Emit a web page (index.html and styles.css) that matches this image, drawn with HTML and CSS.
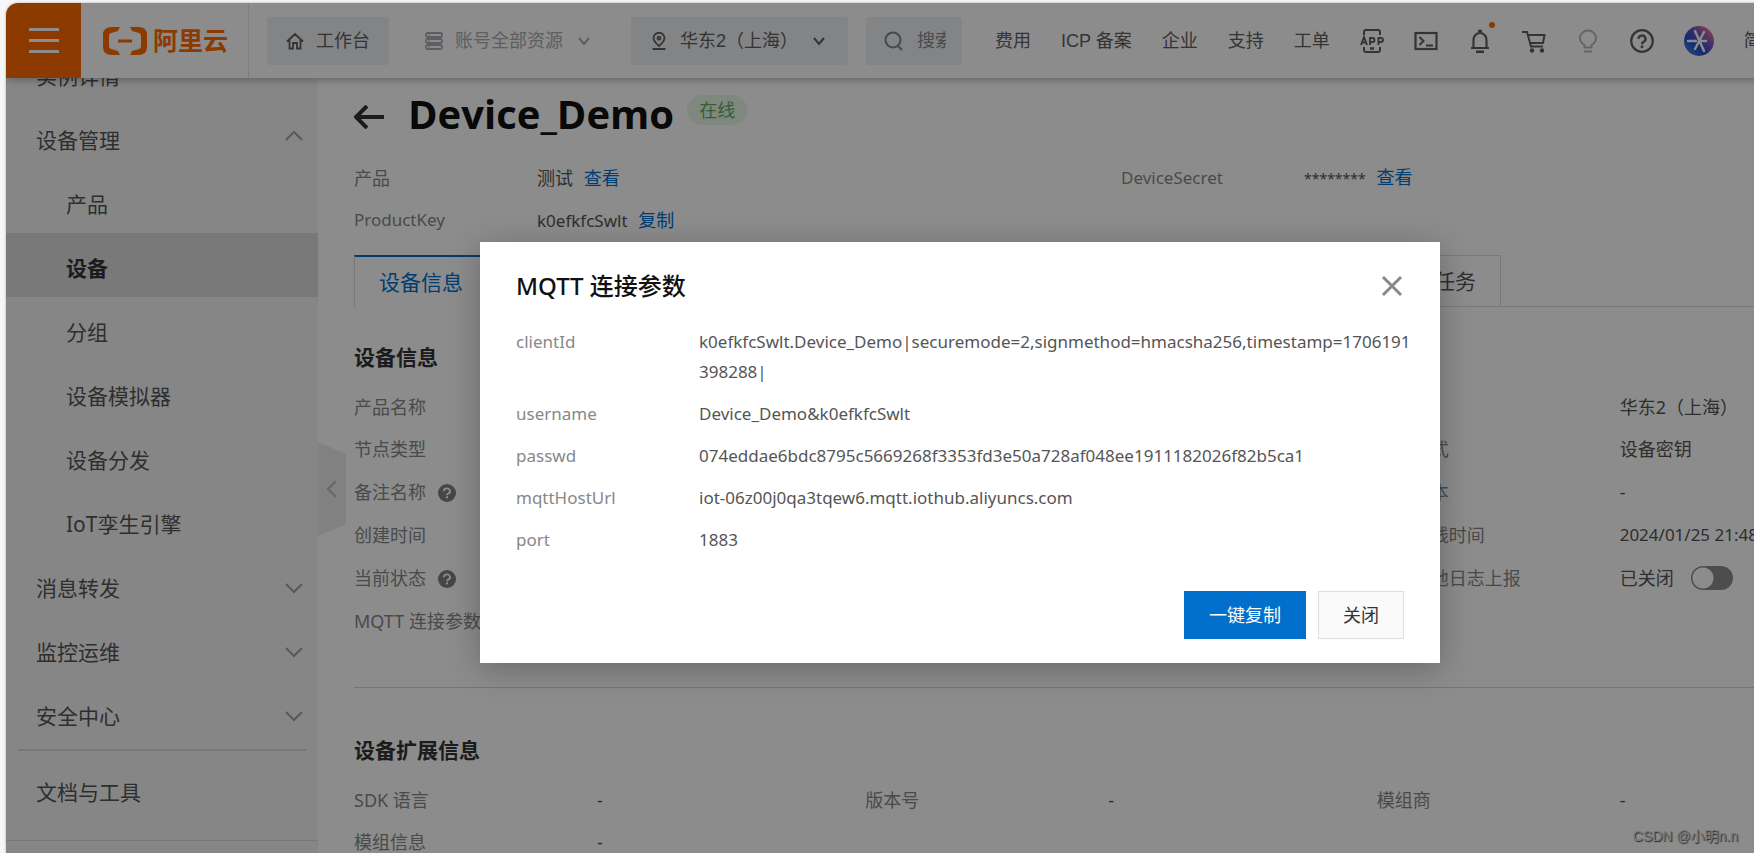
FILE: index.html
```html
<!DOCTYPE html>
<html lang="zh-CN">
<head>
<meta charset="utf-8">
<title>Device_Demo</title>
<link rel="stylesheet" href="styles.css">
</head>
<body>
<svg class="defs" aria-hidden="true">
  <symbol id="chevron" viewBox="0 0 18 12"><path d="M1 2l8 8 8-8" fill="none" stroke="currentColor" stroke-width="2"/></symbol>
  <symbol id="caret" viewBox="0 0 12 10"><path d="M1 2l5 6 5-6" fill="none" stroke="currentColor" stroke-width="2"/></symbol>
  <symbol id="help-solid" viewBox="0 0 18 18"><circle cx="9" cy="9" r="9" fill="currentColor"/><path d="M6 7.200a3 2.700 0 1 1 4.300 2.300c-.9.450-1.300.8-1.300 1.700" fill="none" stroke="#fff" stroke-width="1.900"/><rect x="8" y="12.300" width="2" height="2" fill="#fff"/></symbol>
</svg>

<div class="app">
  <header class="topbar">
    <button class="burger" type="button" aria-label="菜单"><span></span><span></span><span></span></button>
    <a class="brand" href="#">
      <svg width="44" height="28" viewBox="0 0 44 28" aria-hidden="true"><path d="M17 0H9Q0 0 0 8v12q0 8 9 8h8l-2-4-7-2q-2-.5-2-3V9q0-2.500 2-3l7-2zM27 0h8q9 0 9 8v12q0 8-9 8h-8l2-4 7-2q2-.5 2-3V9q0-2.500-2-3l-7-2zM15 12.500h14v3H15z" fill="currentColor"/></svg>
      <span>阿里云</span>
    </a>
    <a class="chip home" href="#">
      <svg width="18" height="18" viewBox="0 0 18 18" aria-hidden="true"><path d="M1 9.500L9 2l8 7.500M3.500 8v8.500H7V11h4v5.500h3.500V8" fill="none" stroke="currentColor" stroke-width="1.800"/></svg>
      <span>工作台</span>
    </a>
    <label class="picker scope">
      <svg width="18" height="18" viewBox="0 0 18 18" aria-hidden="true"><g fill="none" stroke="currentColor" stroke-width="1.800"><rect x="1" y="1" width="16" height="4" rx="1.500"/><rect x="1" y="7" width="16" height="4" rx="1.500"/><rect x="1" y="13" width="16" height="4" rx="1.500"/></g><path d="M3 3h2M3 9h2M3 15h2" stroke="currentColor"/></svg>
      <select aria-label="资源范围"><option>账号全部资源</option></select>
      <svg width="12" height="10" aria-hidden="true"><use href="#caret"/></svg>
    </label>
    <label class="picker chip region">
      <svg width="16" height="18" viewBox="0 0 16 18" aria-hidden="true"><g fill="none" stroke="currentColor" stroke-width="1.800"><path d="M8 14C4 10.500 2.500 8.500 2.500 6a5.500 5.200 0 0 1 11 0c0 2.500-1.500 4.500-5.500 8z"/><circle cx="8" cy="6.200" r="1.500"/><path d="M1.500 17h13"/></g></svg>
      <select aria-label="地域"><option>华东2（上海）</option></select>
      <svg width="12" height="10" aria-hidden="true"><use href="#caret"/></svg>
    </label>
    <label class="chip search">
      <svg width="19" height="20" viewBox="0 0 19 20" aria-hidden="true"><circle cx="9" cy="9" r="7.500" fill="none" stroke="currentColor" stroke-width="2"/><path d="M13.500 14.500l4.500 4.500" stroke="currentColor" stroke-width="2"/></svg>
      <input type="text" placeholder="搜索" aria-label="搜索">
    </label>
    <nav class="links">
      <a href="#">费用</a><a href="#">ICP 备案</a><a href="#">企业</a><a href="#">支持</a><a href="#">工单</a>
    </nav>
    <div class="tools">
      <button type="button" aria-label="APP">
        <svg width="24" height="24" viewBox="0 0 24 24"><path d="M4 6V3q0-2 2-2h12q2 0 2 2v3M4 18v3q0 2 2 2h12q2 0 2-2v-3" fill="none" stroke="currentColor" stroke-width="2"/><path d="M10 19.500h4" stroke="currentColor" stroke-width="2.500"/><path d="M1 16L4 8l3 8M2 13.500h4M10 16V9h2.500a2 2 0 0 1 0 4H10M18.500 16V9H21a2 2 0 0 1 0 4h-2.500" fill="none" stroke="currentColor" stroke-width="1.900"/></svg>
      </button>
      <button type="button" aria-label="终端">
        <svg width="24" height="24" viewBox="0 0 24 24"><rect x="1.500" y="4" width="21" height="16" fill="none" stroke="currentColor" stroke-width="2.200"/><path d="M5.500 8l4 4-4 4M12 16.500h7" fill="none" stroke="currentColor" stroke-width="2"/></svg>
      </button>
      <button type="button" class="bell" aria-label="消息">
        <svg width="24" height="24" viewBox="0 0 24 24"><path d="M3 19h18M5.500 19V11a6.500 7 0 0 1 13 0v8" fill="none" stroke="currentColor" stroke-width="2.200"/><path d="M10 2h4M8 22.700h8" stroke="currentColor" stroke-width="2.500"/></svg>
      </button>
      <button type="button" aria-label="购物车">
        <svg width="24" height="24" viewBox="0 0 24 24"><path d="M0 3h5l4 14.500h12M6 6h16.500L21 14H8" fill="none" stroke="currentColor" stroke-width="2"/><circle cx="10" cy="21.500" r="2.200" fill="currentColor"/><circle cx="20" cy="21.500" r="2.200" fill="currentColor"/></svg>
      </button>
      <button type="button" class="bulb" aria-label="提示">
        <svg width="24" height="24" viewBox="0 0 24 24"><path d="M8.500 18.500V16C5 14 4 11.500 4 9a8 7.500 0 0 1 16 0c0 2.500-1 5-4.500 7v2.500zM8 22.500h8" fill="none" stroke="currentColor" stroke-width="2"/></svg>
      </button>
      <button type="button" aria-label="帮助">
        <svg width="24" height="24" viewBox="0 0 24 24"><circle cx="12" cy="12" r="10.800" fill="none" stroke="currentColor" stroke-width="2.200"/><path d="M8.500 9.800a3.500 3.300 0 1 1 5.200 2.900c-1.200.7-1.700 1.200-1.700 2.500" fill="none" stroke="currentColor" stroke-width="2.400"/><rect x="10.700" y="16.500" width="2.600" height="2.600" fill="currentColor"/></svg>
      </button>
      <button type="button" class="avatar" aria-label="账号">
        <svg width="30" height="30" viewBox="0 0 30 30"><defs><linearGradient id="sky" x1="1" y1="0" x2="0" y2="1"><stop offset=".1" stop-color="#f0709a"/><stop offset=".45" stop-color="#5a54c8"/><stop offset=".65" stop-color="#2450c8"/><stop offset="1" stop-color="#50a0f8"/></linearGradient></defs><circle cx="15" cy="15" r="15" fill="url(#sky)"/><path d="M4 15h8M16 15h6M11 5l9 20M20 6l-9 17" stroke="#fff" stroke-width="2.400" stroke-linecap="round"/></svg>
      </button>
      <a class="lang" href="#">简</a>
    </div>
  </header>

  <div class="body">
    <aside class="sidebar">
      <nav class="menu">
        <a class="item" href="#">实例详情</a>
        <a class="item open" href="#">设备管理<svg width="18" height="12"><use href="#chevron"/></svg></a>
        <a class="item sub" href="#">产品</a>
        <a class="item sub current" href="#">设备</a>
        <a class="item sub" href="#">分组</a>
        <a class="item sub" href="#">设备模拟器</a>
        <a class="item sub" href="#">设备分发</a>
        <a class="item sub" href="#">IoT孪生引擎</a>
        <a class="item" href="#">消息转发<svg width="18" height="12"><use href="#chevron"/></svg></a>
        <a class="item" href="#">监控运维<svg width="18" height="12"><use href="#chevron"/></svg></a>
        <a class="item" href="#">安全中心<svg width="18" height="12"><use href="#chevron"/></svg></a>
        <hr>
        <a class="item docs" href="#">文档与工具</a>
      </nav>
      <button class="collapse" type="button" aria-label="收起"><svg width="12" height="18" viewBox="0 0 12 18"><path d="M10 1L2 9l8 8" fill="none" stroke="currentColor" stroke-width="2"/></svg></button>
    </aside>

    <main class="main">
      <div class="title">
        <a class="back" href="#" aria-label="返回"><svg width="30" height="24" viewBox="0 0 30 24"><path d="M2 12h28M13 1L2 12l11 11" fill="none" stroke="currentColor" stroke-width="4"/></svg></a>
        <h1>Device_Demo</h1>
        <span class="status">在线</span>
      </div>

      <div class="summary">
        <dl>
          <div><dt>产品</dt><dd>测试 <a href="#">查看</a></dd></div>
          <div><dt class="latin">ProductKey</dt><dd><span class="latin">k0efkfcSwlt</span> <a href="#">复制</a></dd></div>
        </dl>
        <dl>
          <div><dt class="latin">DeviceSecret</dt><dd><span class="secret">********</span> <a href="#">查看</a></dd></div>
        </dl>
      </div>

      <div class="tabbar">
        <div class="tabs" role="tablist">
          <button class="tab active" type="button" role="tab" aria-selected="true">设备信息</button>
          <button class="tab" type="button" role="tab">任务</button>
        </div>
      </div>

      <section class="info">
        <h2>设备信息</h2>
        <div class="columns">
          <dl>
            <div><dt>产品名称</dt></div>
            <div><dt>节点类型</dt></div>
            <div><dt>备注名称<svg class="hint" width="18" height="18"><use href="#help-solid"/></svg></dt></div>
            <div><dt>创建时间</dt></div>
            <div><dt>当前状态<svg class="hint" width="18" height="18"><use href="#help-solid"/></svg></dt></div>
            <div><dt>MQTT 连接参数</dt></div>
          </dl>
          <dl class="last">
            <div><dt></dt><dd>华东2（上海）</dd></div>
            <div><dt>认证方式</dt><dd>设备密钥</dd></div>
            <div><dt>固件版本</dt><dd>-</dd></div>
            <div><dt>最后上线时间</dt><dd class="latin">2024/01/25 21:48</dd></div>
            <div><dt>设备本地日志上报</dt><dd><label class="switch">已关闭<input type="checkbox"></label></dd></div>
          </dl>
        </div>
      </section>

      <section class="extra">
        <h2>设备扩展信息</h2>
        <div class="columns">
          <dl><div><dt>SDK 语言</dt><dd>-</dd></div><div><dt>模组信息</dt><dd>-</dd></div></dl>
          <dl><div><dt>版本号</dt><dd>-</dd></div></dl>
          <dl><div><dt>模组商</dt><dd>-</dd></div></dl>
        </div>
      </section>
    </main>
  </div>

  <div class="overlay">
    <div class="modal" role="dialog" aria-labelledby="modal-title">
      <div class="modal-head">
        <h2 id="modal-title">MQTT 连接参数</h2>
        <button class="close" type="button" aria-label="关闭"><svg width="22" height="22" viewBox="0 0 22 22"><path d="M2 2l18 18M20 2L2 20" stroke="currentColor" stroke-width="3"/></svg></button>
      </div>
      <dl class="params">
        <dt>clientId</dt><dd>k0efkfcSwlt.Device_Demo|securemode=2,signmethod=hmacsha256,timestamp=1706191398288|</dd>
        <dt>username</dt><dd>Device_Demo&amp;k0efkfcSwlt</dd>
        <dt>passwd</dt><dd>074eddae6bdc8795c5669268f3353fd3e50a728af048ee1911182026f82b5ca1</dd>
        <dt>mqttHostUrl</dt><dd>iot-06z00j0qa3tqew6.mqtt.iothub.aliyuncs.com</dd>
        <dt>port</dt><dd>1883</dd>
      </dl>
      <div class="actions">
        <button class="btn primary" type="button">一键复制</button>
        <button class="btn" type="button">关闭</button>
      </div>
    </div>
  </div>
</div>
<div class="watermark">CSDN @小明n.n</div>
</body>
</html>
```
FILE: styles.css
```css
* { box-sizing: border-box; }

body {
  margin: 0;
  height: 100vh;
  padding: 3px 0 0 6px;
  overflow: hidden;
  position: relative;
  background: #f7f7f7;
  color: #555;
  font: 18px/30px "Noto Sans", "Noto Sans CJK SC", sans-serif;
}

a { color: inherit; text-decoration: none; }
h1, h2, dl, dd { margin: 0; }
button, input, select { font: inherit; color: inherit; border: 0; padding: 0; margin: 0; background: none; }
svg { display: block; flex: none; }
.defs { display: none; }
.latin { font-size: 17px; }
.secret { font-size: 14px; }

.app {
  position: relative;
  display: flex;
  flex-direction: column;
  min-width: 1908px;
  height: 100%;
  overflow: hidden;
  border-radius: 12px 0 0 0;
  background: #fff;
  box-shadow: 0 0 3px rgba(0, 0, 0, .3);
}

/* Top bar */
.topbar {
  position: relative;
  z-index: 1;
  display: flex;
  align-items: center;
  flex: none;
  height: 75px;
  background: #fff;
  color: #606060;
  box-shadow: 0 2px 8px rgba(0, 0, 0, .28);
  font-family: "Liberation Sans", "Noto Sans CJK SC", sans-serif;
  white-space: nowrap;
}
.burger {
  display: flex;
  flex-direction: column;
  align-items: center;
  justify-content: center;
  gap: 8px;
  width: 75px;
  height: 75px;
  background: #ff6a00;
}
.burger span { width: 30px; height: 3px; background: #fff; }
.brand {
  display: flex;
  align-items: center;
  gap: 6px;
  width: 168px;
  height: 75px;
  padding-left: 22px;
  border-right: 1px solid #e3e4e6;
  color: #ff6a00;
  font-size: 25px;
  font-weight: 700;
}
.chip { height: 48px; border-radius: 3px; background: #eff1f5; }
.home { display: flex; align-items: center; gap: 12px; margin-left: 18px; padding: 0 19px; }
.picker { display: flex; align-items: center; }
.picker select { appearance: none; }
.scope { margin-left: 36px; gap: 12px; color: #a8acb2; }
.scope select { margin-right: 3px; }
.region { margin-left: 41px; padding: 0 23px 0 20px; gap: 13px; }
.region select { margin-right: 1px; }
.search { display: flex; align-items: center; gap: 14px; width: 96px; margin-left: 18px; padding: 0 16px 0 18px; color: #808488; }
.search input { width: 30px; min-width: 0; }
.search input::placeholder { color: #85898e; }
.links { display: flex; gap: 30px; margin-left: 33px; }
.tools { display: flex; align-items: center; gap: 30px; margin-left: 30px; }
.bell { position: relative; }
.bell::after {
  content: "";
  position: absolute;
  top: -7px;
  right: -3px;
  width: 6px;
  height: 6px;
  border-radius: 50%;
  background: #ff6a00;
}
.bulb { color: #b4b8c0; }
.lang { padding-right: 24px; }

/* Side menu */
.body { display: flex; flex: 1; min-height: 0; }
.sidebar { position: relative; flex: none; width: 312px; background: #f5f5f5; }
.menu { height: 100%; overflow: hidden; display: flex; flex-direction: column; justify-content: flex-end; border-bottom: 12px solid #f5f5f5; }
.item {
  display: flex;
  flex: none;
  align-items: center;
  justify-content: space-between;
  height: 64px;
  padding: 6px 15px 0 30px;
  font-size: 21px;
}
.item svg { color: #a0a0a0; }
.open svg { margin-bottom: 8px; transform: rotate(180deg); }
.sub { padding-left: 60px; }
.current { background: #dcdcdc; color: #333; font-weight: 700; }
.menu hr { flex: none; width: 288px; height: 2px; margin: 4px auto 8px; border: 0; background: #dadada; }
.docs { height: 82px; padding-bottom: 22px; border-bottom: 1px solid #dadada; }
.collapse {
  position: absolute;
  left: 100%;
  top: 364px;
  display: flex;
  align-items: center;
  justify-content: center;
  width: 28px;
  height: 94px;
  background: #ebebeb;
  color: #bbb;
  clip-path: polygon(0 0, 100% 12px, 100% 82px, 0 100%);
}

/* Content */
.main { flex: 1; min-width: 0; padding: 12px 26px 0 36px; overflow: hidden; }
.title { display: flex; align-items: center; height: 48px; }
.back { margin-top: 6px; color: #333; }
.title h1 { margin-left: 24px; color: #111; font: 700 40px/48px "Open Sans", "Noto Sans", sans-serif; }
.status { margin-left: 13px; margin-bottom: 8px; padding: 0 12px; border-radius: 15px; background: #e6f8e8; color: #5fae5f; }
dl > div { display: flex; align-items: center; height: 42px; }
dt { display: flex; align-items: center; flex: none; color: #888; }
main dd a { margin-left: 6px; color: #0070cc; }
.summary { display: grid; grid-template-columns: 1fr 1fr; margin-top: 19px; }
.summary dt { width: 183px; }
.tabbar { display: flex; margin-top: 14px; box-shadow: inset 0 -1px #dadada; }
.tabs { display: flex; justify-content: space-between; width: 1147px; }
.tab { height: 52px; padding: 0 24px; border: 1px solid #dadada; background: #fff; font-size: 21px; }
.active { border-top: 2px solid #0070cc; border-bottom: 0; color: #0070cc; }
main h2 { padding: 0 0 14px; color: #333; font-size: 21px; line-height: 30px; }
.info { padding: 35px 0 45px; border-bottom: 1px solid #d8d8d8; }
.extra { padding-top: 47px; }
.columns { display: grid; grid-template-columns: repeat(3, 1fr); }
.columns dt { width: 243px; }
.info dl > div:nth-child(n + 3) { height: 43px; }
.last { grid-column: 3; }
.hint { margin: 3px 0 0 12px; color: #808080; }
.switch { display: flex; align-items: center; gap: 17px; }
.switch input {
  appearance: none;
  width: 42px;
  height: 24px;
  border-radius: 12px;
  background: radial-gradient(circle at 12px 12px, #fff 10px, #8c8c8c 11px);
}

/* Dialog */
.overlay {
  position: absolute;
  z-index: 2;
  inset: 0;
  display: flex;
  align-items: flex-start;
  justify-content: center;
  padding-top: 239px;
  background: rgba(0, 0, 0, .45);
}
.modal {
  width: 960px;
  padding: 24px 26px 24px 36px;
  background: #fff;
  box-shadow: 0 6px 30px rgba(0, 0, 0, .25);
}
.modal-head { display: flex; align-items: center; justify-content: space-between; height: 40px; padding-right: 10px; }
.modal-head h2 { color: #111; font-size: 24px; font-weight: 500; }
.close { padding-right: 1px; color: #888; }
.params {
  display: grid;
  grid-template-columns: 183px 1fr;
  row-gap: 12px;
  padding: 21px 0 36px;
  font-size: 17px;
}
.params dt { align-items: flex-start; }
.params dd { word-break: break-all; }
.actions { display: flex; justify-content: flex-end; gap: 12px; padding-right: 10px; }
.btn { height: 48px; padding: 0 24px; border: 1px solid #dedede; background: #fafafa; color: #333; }
.primary { padding: 0 25px; border: 0; background: #0070cc; color: #fff; }

.watermark {
  position: absolute;
  right: 16px;
  bottom: 2px;
  color: #ddd;
  font: 14px/30px "Liberation Sans", "Noto Sans CJK SC", sans-serif;
  text-shadow: 1px 1px 1px #444;
}
```
